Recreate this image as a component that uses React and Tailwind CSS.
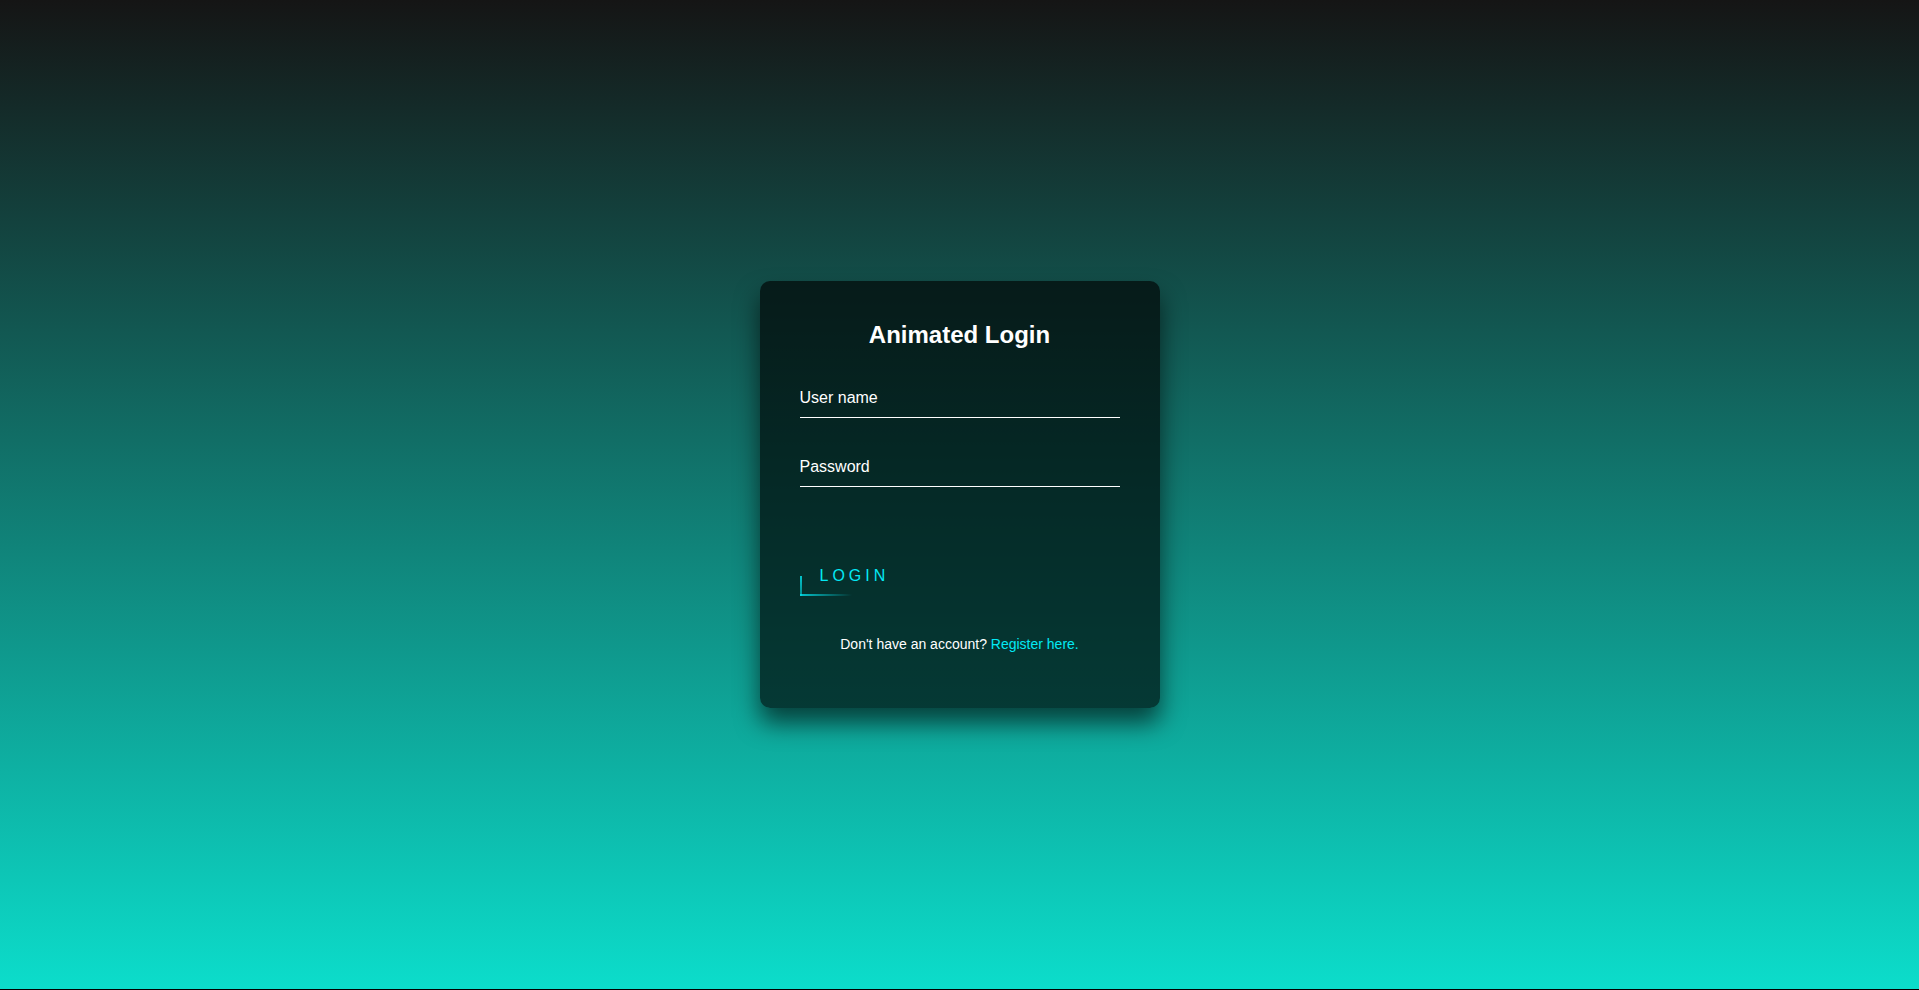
export default function App() {
  return (
    <div className="h-[990px] bg-black font-['Liberation_Sans',Arial,sans-serif]">
      <div className="h-[989px] bg-linear-to-b/srgb from-[#151515] to-[#0cddcb] flex items-center justify-center">
        <div className="w-[400px] p-10 bg-black/65 rounded-[10px] shadow-[0_15px_25px_rgba(0,0,0,0.6)]">
          <h2 className="text-white text-2xl font-bold text-center leading-[1.15] mb-[30px]">
            Animated Login
          </h2>
          <div className="mb-[30px] border-b border-white py-2.5 text-white text-base leading-[1.15]">
            User name
          </div>
          <div className="mb-[30px] border-b border-white py-2.5 text-white text-base leading-[1.15]">
            Password
          </div>
          <div className="mt-[70px] flex">
            <div className="relative overflow-hidden px-5 py-2.5 text-[#03e9f4] tracking-[4px] text-base leading-[1.15] uppercase">
              Login
              <span className="absolute left-0 bottom-0 w-[2px] h-[20px] bg-linear-to-b from-[#03e9f4] to-[#03e9f4]/60 opacity-80" />
              <span className="absolute left-0 bottom-0 h-[2px] w-[52px] bg-linear-to-r from-[#03e9f4]/80 to-transparent" />
            </div>
          </div>
          <p className="mt-[40px] mb-[16px] text-center text-sm leading-[1.15] text-white">
            Don't have an account? <span className="text-[#03e9f4]">Register here.</span>
          </p>
        </div>
      </div>
    </div>
  );
}
